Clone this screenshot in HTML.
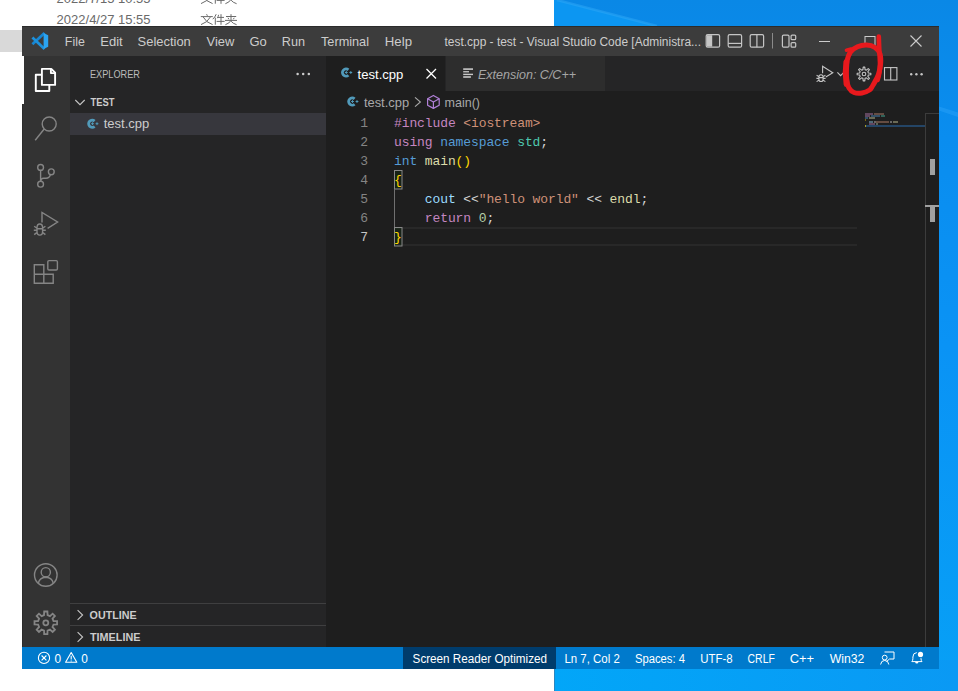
<!DOCTYPE html>
<html><head><meta charset="utf-8">
<style>
html,body{margin:0;padding:0;width:958px;height:691px;overflow:hidden;background:#fff}
svg{display:block}
.ui{font-family:"Liberation Sans",sans-serif}
.mono{font-family:"Liberation Mono",monospace}
</style></head>
<body>
<svg width="958" height="691" viewBox="0 0 958 691">
<defs>
<linearGradient id="desk" x1="0" y1="0" x2="0" y2="1">
<stop offset="0" stop-color="#0a88e6"/>
<stop offset="0.2" stop-color="#0a8def"/>
<stop offset="0.5" stop-color="#0a93f5"/>
<stop offset="1" stop-color="#07a0f6"/>
</linearGradient>
<linearGradient id="deskb" x1="0" y1="0" x2="1" y2="0">
<stop offset="0" stop-color="#02a6f8"/>
<stop offset="1" stop-color="#0a99f4"/>
</linearGradient>
</defs>
<!-- background -->
<rect x="0" y="0" width="554" height="691" fill="#ffffff"/>
<rect x="554" y="0" width="404" height="691" fill="url(#desk)"/>
<rect x="554" y="660" width="404" height="31" fill="url(#deskb)"/>
<rect x="554" y="660" width="1" height="31" fill="#2a86c0"/>
<rect x="0" y="30" width="22" height="22" fill="#d9d9d9"/>


<!-- explorer window text -->
<g class="ui" font-size="13" fill="#6a6a6a">
<text x="56.6" y="3" textLength="94" lengthAdjust="spacingAndGlyphs">2022/7/15 10:55</text>
<text x="56.6" y="24" textLength="94" lengthAdjust="spacingAndGlyphs">2022/4/27 15:55</text>
</g>
<g id="cjk" fill="none" stroke="#6a6a6a" stroke-width="1">
<path d="M206.6 14.2 L207.4 15.8 M200.8 16.6 H212.8 M203.2 17 Q206 22.5 212.6 24.6 M210.4 17 Q207.5 22.5 201 24.6"/>
<path d="M216.2 14.2 Q215 17.2 212.8 19.2 M215.3 17.6 V24.7 M218.6 14.8 Q218.2 16.8 217.3 18.2 M217.8 17.4 H224 M216.6 21.4 H224.6 M221 14.2 V24.8"/>
<path d="M226 16.5 H236.2 M225 20.4 H237 M231 14.2 V20.4 M228 17.8 L228.9 19.3 M234.2 17.8 L233.3 19.3 M231 20.4 Q229.5 23.3 225.4 24.7 M231.1 21.2 Q232.8 23.5 236.6 24.7"/>
</g>
<use href="#cjk" transform="translate(0,-21)"/>
<rect x="554" y="0" width="1" height="26" fill="#4d6f8c"/>
<path d="M554 0 L557 0 L657 26 L554 26 Z" fill="#0c96f2"/>
<path d="M557 0 L657 26" stroke="#30a8f6" stroke-width="2.5" opacity="0.5"/>
<path d="M939 106.5 L958 112.5 L958 117 L939 110.5 Z" fill="#40b0ff" opacity="0.3"/>

<!-- VS Code window -->
<rect x="22" y="26" width="917" height="30" fill="#3c3c3c"/>
<rect x="24" y="56" width="46" height="48" fill="#333333"/>
<rect x="22" y="104" width="48" height="543" fill="#333333"/>
<rect x="70" y="56" width="256" height="591" fill="#252526"/>
<rect x="22" y="26" width="917" height="1" fill="#2b2b2b"/>
<rect x="22" y="104" width="1" height="543" fill="#2b2b2b"/>
<rect x="70" y="113" width="256" height="22" fill="#37373d"/>
<rect x="70" y="603" width="256" height="1" fill="#3f3f40"/>
<rect x="70" y="625" width="256" height="1" fill="#3f3f40"/>
<rect x="326" y="56" width="613" height="35" fill="#252526"/>
<rect x="326" y="56" width="119" height="35" fill="#1e1e1e"/>
<rect x="446" y="56" width="159" height="35" fill="#2d2d2d"/>
<rect x="326" y="91" width="613" height="556" fill="#1e1e1e"/>
<rect x="22" y="647" width="917" height="22" fill="#007acc"/>
<rect x="403" y="647" width="153" height="22" fill="#003c6c"/>


<!-- title bar -->
<g id="logo">
<path d="M44.5 33 L32.4 44.2" stroke="#1786d2" stroke-width="2.7"/>
<path d="M44.5 49 L32.4 37.6" stroke="#1c91dc" stroke-width="2.7"/>
<polygon points="43.6,33 48.2,35.2 48.2,46.8 43.6,49" fill="#2ba4f1"/>
</g>
<g class="ui" font-size="13" fill="#cccccc">
<text x="64.8" y="46" textLength="20" lengthAdjust="spacingAndGlyphs">File</text>
<text x="100.3" y="46" textLength="22.4" lengthAdjust="spacingAndGlyphs">Edit</text>
<text x="137.6" y="46" textLength="53.2" lengthAdjust="spacingAndGlyphs">Selection</text>
<text x="206.5" y="46" textLength="27.8" lengthAdjust="spacingAndGlyphs">View</text>
<text x="249.5" y="46" textLength="17.3" lengthAdjust="spacingAndGlyphs">Go</text>
<text x="281.8" y="46" textLength="23.2" lengthAdjust="spacingAndGlyphs">Run</text>
<text x="321" y="46" textLength="48" lengthAdjust="spacingAndGlyphs">Terminal</text>
<text x="384.8" y="46" textLength="27.2" lengthAdjust="spacingAndGlyphs">Help</text>
</g>
<text class="ui" x="444.5" y="46" font-size="12" fill="#cccccc" textLength="256.5" lengthAdjust="spacingAndGlyphs">test.cpp - test - Visual Studio Code [Administra...</text>
<g fill="none" stroke="#c5c5c5" stroke-width="1.2">
<rect x="706.2" y="34.6" width="13.4" height="12.6" rx="1.5"/>
<rect x="728.2" y="34.6" width="13.4" height="12.6" rx="1.5"/>
<line x1="728.2" y1="43.4" x2="741.6" y2="43.4"/>
<rect x="750.2" y="34.6" width="13.4" height="12.6" rx="1.5"/>
<line x1="756.9" y1="34.6" x2="756.9" y2="47.2"/>
<rect x="782.4" y="35.1" width="6.6" height="12.1" rx="1.2"/>
<rect x="791.1" y="35.1" width="4.6" height="4.6" rx="1"/>
<rect x="791.1" y="42.6" width="4.6" height="4.6" rx="1"/>
</g>
<rect x="706.8" y="35.2" width="5.4" height="11.4" fill="#c5c5c5"/>
<rect x="772" y="33" width="1" height="15.5" fill="#8a8a8a"/>
<g stroke="#cccccc" stroke-width="1" fill="none">
<line x1="819" y1="41.5" x2="830" y2="41.5"/>
<rect x="865" y="36.5" width="10" height="10"/>
<path d="M910.5 35.5 L921.5 46.5 M921.5 35.5 L910.5 46.5" stroke-width="1.1"/>
</g>


<!-- activity bar icons -->
<g fill="none" stroke="#ffffff" stroke-width="1.9" stroke-linejoin="round">
<path d="M41.9 68.9 H51.3 L55.1 72.7 V84.9 H41.9 Z"/>
<path d="M50.9 69 V73.1 H55"/>
<path d="M41.9 74.7 H35.8 V91 H49.3 V84.9"/>
</g>
<g fill="none" stroke="#858585" stroke-width="1.4">
<circle cx="49.2" cy="124" r="7"/>
<path d="M44.2 129 L35.2 140.2"/>
<circle cx="40.6" cy="167.4" r="2.9"/>
<circle cx="40.6" cy="184.2" r="2.9"/>
<circle cx="51.3" cy="171.8" r="2.9"/>
<path d="M40.6 170.3 V181.3"/>
<path d="M50.4 174.6 Q49.6 178.2 46 178.2 H43.5 Q40.8 178.4 40.6 181"/>
<path d="M42 222.6 V212.4 L57.6 222 L47.6 228.4"/>
<path d="M34.3 264.7 H43.8 V274.2 H53.2 V283.3 H34.3 Z M34.3 274.2 H43.8 V283.3"/>
<rect x="47.8" y="260.6" width="9.6" height="9.4" rx="1.2"/>
<circle cx="45.8" cy="575" r="11.3"/>
<circle cx="45.8" cy="572.2" r="4.6"/>
<path d="M38.4 583 Q39.5 577.5 45.8 577.2 Q52.1 577.5 53.2 583"/>
</g>
<g fill="none" stroke="#858585" stroke-width="1.4">
<path d="M37 227.6 A2.8 3.6 0 0 1 42.6 227.6 V231.5 A2.8 3.6 0 0 1 37 231.5 Z M37 228.8 H42.6 M34.2 226.2 L36.6 228 M45.4 226.2 L43 228 M33.8 230.3 H37 M45.8 230.3 H42.6 M34.2 234.6 L36.8 232.6 M45.4 234.6 L42.8 232.6"/>
</g>


<g fill="none" stroke="#858585" stroke-width="1.8" stroke-linejoin="miter">
<path d="M44.19 611.51 L47.41 611.51 L47.58 615.10 L49.98 616.10 L52.64 613.68 L54.92 615.96 L52.50 618.62 L53.50 621.02 L57.09 621.19 L57.09 624.41 L53.50 624.58 L52.50 626.98 L54.92 629.64 L52.64 631.92 L49.98 629.50 L47.58 630.50 L47.41 634.09 L44.19 634.09 L44.02 630.50 L41.62 629.50 L38.96 631.92 L36.68 629.64 L39.10 626.98 L38.10 624.58 L34.51 624.41 L34.51 621.19 L38.10 621.02 L39.10 618.62 L36.68 615.96 L38.96 613.68 L41.62 616.10 L44.02 615.10 Z"/>
<circle cx="45.8" cy="622.8" r="2.5"/>
</g>


<!-- sidebar -->
<text class="ui" x="90" y="78" font-size="11" fill="#bbbbbb" textLength="50" lengthAdjust="spacingAndGlyphs">EXPLORER</text>
<g fill="#cccccc"><circle cx="297.6" cy="74" r="1.25"/><circle cx="303.2" cy="74" r="1.25"/><circle cx="308.8" cy="74" r="1.25"/></g>
<path d="M75.3 100 L80 104.7 L84.7 100" fill="none" stroke="#c5c5c5" stroke-width="1.1"/>
<text class="ui" x="90.4" y="106" font-size="11" font-weight="bold" fill="#cccccc" textLength="24" lengthAdjust="spacingAndGlyphs">TEST</text>
<use href="#cppi" transform="translate(-253.8,51.2)"/>
<text class="ui" x="103.7" y="128.3" font-size="13" fill="#cccccc" textLength="45.6" lengthAdjust="spacingAndGlyphs">test.cpp</text>
<g fill="none" stroke="#c5c5c5" stroke-width="1.1">
<path d="M77.6 610.2 L82.6 615 L77.6 619.8"/>
<path d="M77.6 632.2 L82.6 637 L77.6 641.8"/>
</g>
<text class="ui" x="89.6" y="619" font-size="11" font-weight="bold" fill="#cccccc" textLength="47" lengthAdjust="spacingAndGlyphs">OUTLINE</text>
<text class="ui" x="90" y="641" font-size="11" font-weight="bold" fill="#cccccc" textLength="50.4" lengthAdjust="spacingAndGlyphs">TIMELINE</text>


<!-- tabs -->
<g id="cppi"><path d="M348.4 69.9 A3.6 3.6 0 1 0 348.4 75.3" fill="none" stroke="#519aba" stroke-width="2.8"/><path d="M344.9 72.5 H347.7 M346.3 71.1 V73.9 M349.4 72.5 H352.2 M350.8 71.1 V73.9" stroke="#519aba" stroke-width="1"/></g>
<text class="ui" x="357.6" y="79" font-size="13" fill="#ffffff" textLength="45.8" lengthAdjust="spacingAndGlyphs">test.cpp</text>
<path d="M426.5 69 L436 78.5 M436 69 L426.5 78.5" stroke="#ffffff" stroke-width="1.3"/>
<g fill="#c8c8c8">
<rect x="463.2" y="68.3" width="9.8" height="1.6"/>
<rect x="463.2" y="71.1" width="5.8" height="1.3"/>
<rect x="463.2" y="73.7" width="9.8" height="1.4"/>
<rect x="463.2" y="76.2" width="7.7" height="1.6"/>
</g>
<text class="ui" x="478" y="79" font-size="13" font-style="italic" fill="#a5a5a5" textLength="98" lengthAdjust="spacingAndGlyphs">Extension: C/C++</text>
<!-- editor actions -->
<g fill="none" stroke="#c5c5c5" stroke-width="1.1">
<path d="M822.6 73.3 V66.3 L832.8 72.7 L825.8 77"/>
<path d="M818.9 77 A2.1 2.2 0 0 1 823.1 77 V79.2 A2.1 2.3 0 0 1 818.9 79.2 Z M818.9 77.6 H823.1 M816.6 75.2 L818.8 76.6 M825.4 75.2 L823.2 76.6 M816.4 78.4 H818.9 M825.6 78.4 H823.1 M816.6 81.6 L818.8 80.2 M825.4 81.6 L823.2 80.2"/>
<path d="M837.4 72.4 L840.6 75.6 L843.6 72.6"/>
<rect x="884.5" y="67.6" width="12.4" height="12.4"/>
<line x1="890.7" y1="67.6" x2="890.7" y2="80"/>
</g>
<g fill="#c5c5c5"><circle cx="911.2" cy="74.3" r="1.2"/><circle cx="916.4" cy="74.3" r="1.2"/><circle cx="921.6" cy="74.3" r="1.2"/></g>
<g fill="none" stroke="#c5c5c5" stroke-width="1.1" stroke-linejoin="round"><path d="M863.19 67.15 L864.81 67.15 L865.05 69.62 L866.35 70.16 L868.27 68.58 L869.42 69.73 L867.84 71.65 L868.38 72.95 L870.85 73.19 L870.85 74.81 L868.38 75.05 L867.84 76.35 L869.42 78.27 L868.27 79.42 L866.35 77.84 L865.05 78.38 L864.81 80.85 L863.19 80.85 L862.95 78.38 L861.65 77.84 L859.73 79.42 L858.58 78.27 L860.16 76.35 L859.62 75.05 L857.15 74.81 L857.15 73.19 L859.62 72.95 L860.16 71.65 L858.58 69.73 L859.73 68.58 L861.65 70.16 L862.95 69.62 Z"/><circle cx="864" cy="74" r="1.8"/></g>


<!-- breadcrumbs -->
<use href="#cppi" transform="translate(6.2,29)"/>
<text class="ui" x="363.9" y="106.5" font-size="13" fill="#a9a9a9" textLength="45.2" lengthAdjust="spacingAndGlyphs">test.cpp</text>
<path d="M415 97.3 L420.4 102 L415 106.7" fill="none" stroke="#a9a9a9" stroke-width="1.1"/>
<g fill="none" stroke="#b180d7" stroke-width="1.2" stroke-linejoin="round">
<path d="M433.4 95.4 L439.2 98.7 V105.2 L433.4 108.4 L427.6 105.2 V98.7 Z"/>
<path d="M427.6 98.7 L433.4 102 L439.2 98.7 M433.4 102 V108.4"/>
</g>
<text class="ui" x="444.6" y="106.5" font-size="13" fill="#a9a9a9" textLength="35.4" lengthAdjust="spacingAndGlyphs">main()</text>

<!-- code -->
<rect x="394" y="227" width="463" height="2" fill="#282828"/>
<rect x="394" y="244" width="463" height="2" fill="#282828"/>
<rect x="394.5" y="170.5" width="7.5" height="18.5" fill="#0b2a0b" fill-opacity="0.35" stroke="#888888" stroke-width="1"/>
<rect x="394.5" y="227.5" width="7.5" height="18.5" fill="#0b2a0b" fill-opacity="0.35" stroke="#888888" stroke-width="1"/>
<rect x="394" y="189" width="1" height="38" fill="#707070"/>
<g class="mono" font-size="13" letter-spacing="-0.1" xml:space="preserve">
<text x="360.2" y="127" fill="#858585">1</text>
<text x="394.00" y="127" fill="#c586c0">#include</text>
<text x="463.30" y="127" fill="#ce9178">&lt;iostream&gt;</text>
<text x="360.2" y="146" fill="#858585">2</text>
<text x="394.00" y="146" fill="#c586c0">using</text>
<text x="440.20" y="146" fill="#569cd6">namespace</text>
<text x="517.20" y="146" fill="#4ec9b0">std</text>
<text x="540.30" y="146" fill="#d4d4d4">;</text>
<text x="360.2" y="165" fill="#858585">3</text>
<text x="394.00" y="165" fill="#569cd6">int</text>
<text x="424.80" y="165" fill="#dcdcaa">main</text>
<text x="455.60" y="165" fill="#ffd700">()</text>
<text x="360.2" y="184" fill="#858585">4</text>
<text x="394.00" y="184" fill="#ffd700">{</text>
<text x="360.2" y="203" fill="#858585">5</text>
<text x="424.80" y="203" fill="#9cdcfe">cout</text>
<text x="463.30" y="203" fill="#d4d4d4">&lt;&lt;</text>
<text x="478.70" y="203" fill="#ce9178">"hello world"</text>
<text x="586.50" y="203" fill="#d4d4d4">&lt;&lt;</text>
<text x="609.60" y="203" fill="#dcdcaa">endl</text>
<text x="640.40" y="203" fill="#d4d4d4">;</text>
<text x="360.2" y="222" fill="#858585">6</text>
<text x="424.80" y="222" fill="#c586c0">return</text>
<text x="478.70" y="222" fill="#b5cea8">0</text>
<text x="486.40" y="222" fill="#d4d4d4">;</text>
<text x="360.2" y="241" fill="#c6c6c6">7</text>
<text x="394.00" y="241" fill="#ffd700">}</text>
</g>

<!-- status bar -->
<g fill="none" stroke="#ffffff" stroke-width="1.1">
<circle cx="44" cy="657.9" r="5.6"/>
<path d="M41.6 655.5 L46.4 660.3 M46.4 655.5 L41.6 660.3"/>
<path d="M71.2 652.6 L65.6 662.3 H76.8 Z" stroke-linejoin="round"/>
<path d="M71.2 655.8 V659.6 M71.2 660.6 V661.6"/>
</g>
<g class="ui" font-size="12" fill="#ffffff">
<text x="54.4" y="663" textLength="6.6" lengthAdjust="spacingAndGlyphs">0</text>
<text x="81.2" y="663" textLength="6.6" lengthAdjust="spacingAndGlyphs">0</text>
<text x="412.6" y="663" textLength="134.4" lengthAdjust="spacingAndGlyphs">Screen Reader Optimized</text>
<text x="564.4" y="663" textLength="55.4" lengthAdjust="spacingAndGlyphs">Ln 7, Col 2</text>
<text x="634.9" y="663" textLength="50" lengthAdjust="spacingAndGlyphs">Spaces: 4</text>
<text x="700.3" y="663" textLength="32.4" lengthAdjust="spacingAndGlyphs">UTF-8</text>
<text x="747.6" y="663" textLength="27.2" lengthAdjust="spacingAndGlyphs">CRLF</text>
<text x="789.7" y="663" textLength="24.4" lengthAdjust="spacingAndGlyphs">C++</text>
<text x="829.7" y="663" textLength="34.6" lengthAdjust="spacingAndGlyphs">Win32</text>
</g>
<g fill="none" stroke="#ffffff" stroke-width="1">
<path d="M884.5 652 H894 V659 H889.5 L886.5 661.5"/>
<circle cx="884.7" cy="657.6" r="2.4"/>
<path d="M880.6 664.5 Q881 660.6 884.7 660.4 Q888.4 660.6 888.8 664.5"/>
<path d="M911.8 661.6 H922 Q921 660.6 921 658.6 V657.8 M911.8 661.6 Q912.9 660.6 912.9 658.6 V657 Q912.9 652.8 916.8 652.6"/>
</g>
<circle cx="920.5" cy="654.4" r="2.6" fill="#ffffff"/>
<path d="M915.2 662 A1.6 1.6 0 0 0 918.4 662 Z" fill="#ffffff"/>


<!-- minimap -->
<g opacity="0.4">
<rect x="865" y="113" width="8" height="2" fill="#c586c0"/>
<rect x="874" y="113" width="10" height="2" fill="#ce9178"/>
<rect x="865" y="115" width="5" height="2" fill="#c586c0"/>
<rect x="871" y="115" width="9" height="2" fill="#569cd6"/>
<rect x="881" y="115" width="4" height="2" fill="#4ec9b0"/>
<rect x="865" y="117" width="3" height="2" fill="#569cd6"/>
<rect x="869" y="117" width="6" height="2" fill="#dcdcaa"/>
<rect x="865" y="119" width="1" height="2" fill="#ffd700"/>
<rect x="869" y="121" width="4" height="2" fill="#9cdcfe"/>
<rect x="874" y="121" width="2" height="2" fill="#d4d4d4"/>
<rect x="876" y="121" width="13" height="2" fill="#ce9178"/>
<rect x="890" y="121" width="2" height="2" fill="#d4d4d4"/>
<rect x="893" y="121" width="5" height="2" fill="#dcdcaa"/>
<rect x="869" y="123" width="6" height="2" fill="#c586c0"/>
<rect x="876" y="123" width="2" height="2" fill="#b5cea8"/>
</g>
<rect x="865" y="125" width="60" height="2" fill="#264f78" opacity="0.8"/>
<rect x="865" y="125" width="1" height="2" fill="#ffd700" opacity="0.6"/>
<!-- overview ruler -->
<rect x="925" y="113" width="1" height="534" fill="#3c3c3c"/>
<rect x="925" y="113" width="14" height="1" fill="#3c3c3c"/>
<rect x="930" y="159" width="5" height="16" fill="#a0a0a0"/>
<rect x="925" y="205" width="14" height="2" fill="#a0a0a0"/>
<rect x="930" y="207" width="5" height="15" fill="#a0a0a0"/>
<!-- red annotation -->
<g fill="none" stroke="#e8191d" stroke-linecap="round" stroke-linejoin="round">
<path d="M850.50 52.00 C852.25 49.63 854.83 47.97 857.50 46.80 C860.17 45.63 863.58 44.88 866.50 45.00 C869.42 45.12 872.75 46.00 875.00 47.50 C877.25 49.00 879.07 51.25 880.00 54.00 C880.93 56.75 880.83 60.67 880.60 64.00 C880.37 67.33 879.43 71.25 878.60 74.00 C877.77 76.75 876.62 78.50 875.60 80.50 C874.58 82.50 873.52 84.42 872.50 86.00 C871.48 87.58 871.25 88.83 869.50 90.00 C867.75 91.17 864.58 92.58 862.00 93.00 C859.42 93.42 856.17 93.33 854.00 92.50 C851.83 91.67 850.23 90.08 849.00 88.00 C847.77 85.92 847.07 83.00 846.60 80.00 C846.13 77.00 846.13 73.17 846.20 70.00 C846.27 66.83 846.28 64.00 847.00 61.00 C847.72 58.00 848.75 54.37 850.50 52.00 Z" stroke-width="5"/>
<path d="M846.6 84 C845.4 76 845.6 68 846.4 62" stroke-width="6"/>
<path d="M846.5 50.2 L851 49" stroke-width="3.6"/>
<path d="M878.8 36.6 C879 46 879.6 55 880 63 C880.2 70 879 76 877.6 80" stroke-width="4.6"/>
</g>
</svg>
</body></html>
